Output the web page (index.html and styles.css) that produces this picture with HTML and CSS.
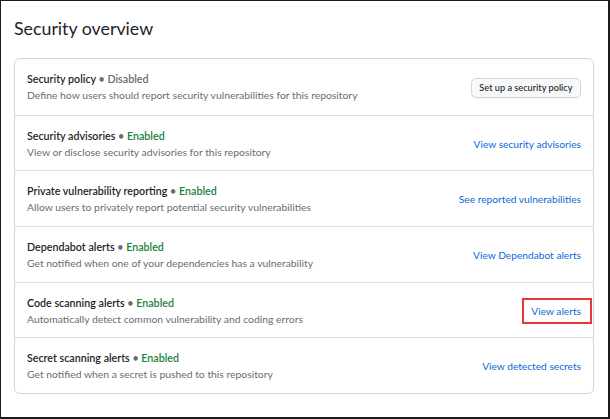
FILE: index.html
```html
<!DOCTYPE html>
<html lang="en">
<head>
<meta charset="utf-8">
<title>Security overview</title>
<link rel="stylesheet" href="styles.css">
</head>
<body>
<div class="frame">
  <h2 class="page-title">Security overview</h2>
  <div class="card">
    <div class="row">
      <div class="info">
        <h3 class="row-title">Security policy <span class="state-muted">• Disabled</span></h3>
        <p class="row-desc">Define how users should report security vulnerabilities for this repository</p>
      </div>
      <button class="btn" type="button">Set up a security policy</button>
    </div>
    <div class="row">
      <div class="info">
        <h3 class="row-title">Security advisories <span class="sep">•</span> <span class="state-on">Enabled</span></h3>
        <p class="row-desc">View or disclose security advisories for this repository</p>
      </div>
      <a class="link" href="#">View security advisories</a>
    </div>
    <div class="row">
      <div class="info">
        <h3 class="row-title">Private vulnerability reporting <span class="sep">•</span> <span class="state-on">Enabled</span></h3>
        <p class="row-desc">Allow users to privately report potential security vulnerabilities</p>
      </div>
      <a class="link" href="#">See reported vulnerabilities</a>
    </div>
    <div class="row">
      <div class="info">
        <h3 class="row-title">Dependabot alerts <span class="sep">•</span> <span class="state-on">Enabled</span></h3>
        <p class="row-desc">Get notified when one of your dependencies has a vulnerability</p>
      </div>
      <a class="link" href="#">View Dependabot alerts</a>
    </div>
    <div class="row">
      <div class="info">
        <h3 class="row-title">Code scanning alerts <span class="sep">•</span> <span class="state-on">Enabled</span></h3>
        <p class="row-desc">Automatically detect common vulnerability and coding errors</p>
      </div>
      <a class="link link-highlight" href="#">View alerts</a>
    </div>
    <div class="row">
      <div class="info">
        <h3 class="row-title">Secret scanning alerts <span class="sep">•</span> <span class="state-on">Enabled</span></h3>
        <p class="row-desc">Get notified when a secret is pushed to this repository</p>
      </div>
      <a class="link" href="#">View detected secrets</a>
    </div>
  </div>
</div>
</body>
</html>
```
FILE: styles.css
```css
html, body {
  margin: 0;
  padding: 0;
  background: #ffffff;
}

body {
  font-family: Lato, "Liberation Sans", sans-serif;
  color: #1f2328;
}

.frame {
  box-sizing: border-box;
  width: 610px;
  height: 419px;
  border-left: 1px solid #1b1b1b;
  border-top: 1px solid #1b1b1b;
  border-right: 2px solid #1b1b1b;
  border-bottom: 2px solid #1b1b1b;
  padding: 15px 14px 0 13px;
  background: #ffffff;
}

.page-title {
  margin: 0;
  font-size: 17.8px;
  line-height: 24px;
  font-weight: 400;
  color: #1f2328;
}

.card {
  margin-top: 18px;
  border: 1px solid #d0d7de;
  border-radius: 6px;
}

.row {
  display: flex;
  align-items: center;
  justify-content: space-between;
  gap: 12px;
  padding: 12px 12px 10.67px 12px;
  border-top: 1px solid #d8dee4;
}

.row:first-child {
  border-top: 0;
  padding-top: 12px;
  padding-bottom: 11.67px;
}

.info {
  min-width: 0;
}

.row-title {
  margin: 0;
  font-size: 10.7px;
  line-height: 16px;
  font-weight: 600;
  color: #1f2328;
}

.state-muted,
.sep {
  color: #656d76;
}

.state-on {
  color: #1a7f37;
}

.row-desc {
  margin: 0;
  font-size: 10.36px;
  line-height: 16px;
  color: #656d76;
}

.btn {
  font-family: inherit;
  font-size: 9.2px;
  font-weight: 500;
  line-height: 18px;
  height: 20px;
  padding: 0 7.5px;
  color: #1f2328;
  background: #f6f8fa;
  border: 1px solid #d0d7de;
  border-radius: 5px;
  box-shadow: 0 1px 0 rgba(31, 35, 40, 0.04);
  cursor: pointer;
  margin-top: 2px;
}

.link {
  font-size: 10.2px;
  line-height: 16px;
  color: #0969da;
  text-decoration: none;
  white-space: nowrap;
}

.link-highlight {
  position: relative;
}

.link-highlight::after {
  content: "";
  position: absolute;
  top: -5px;
  bottom: -5px;
  left: -9px;
  right: -11px;
  border: 2px solid #e5383b;
}
```
